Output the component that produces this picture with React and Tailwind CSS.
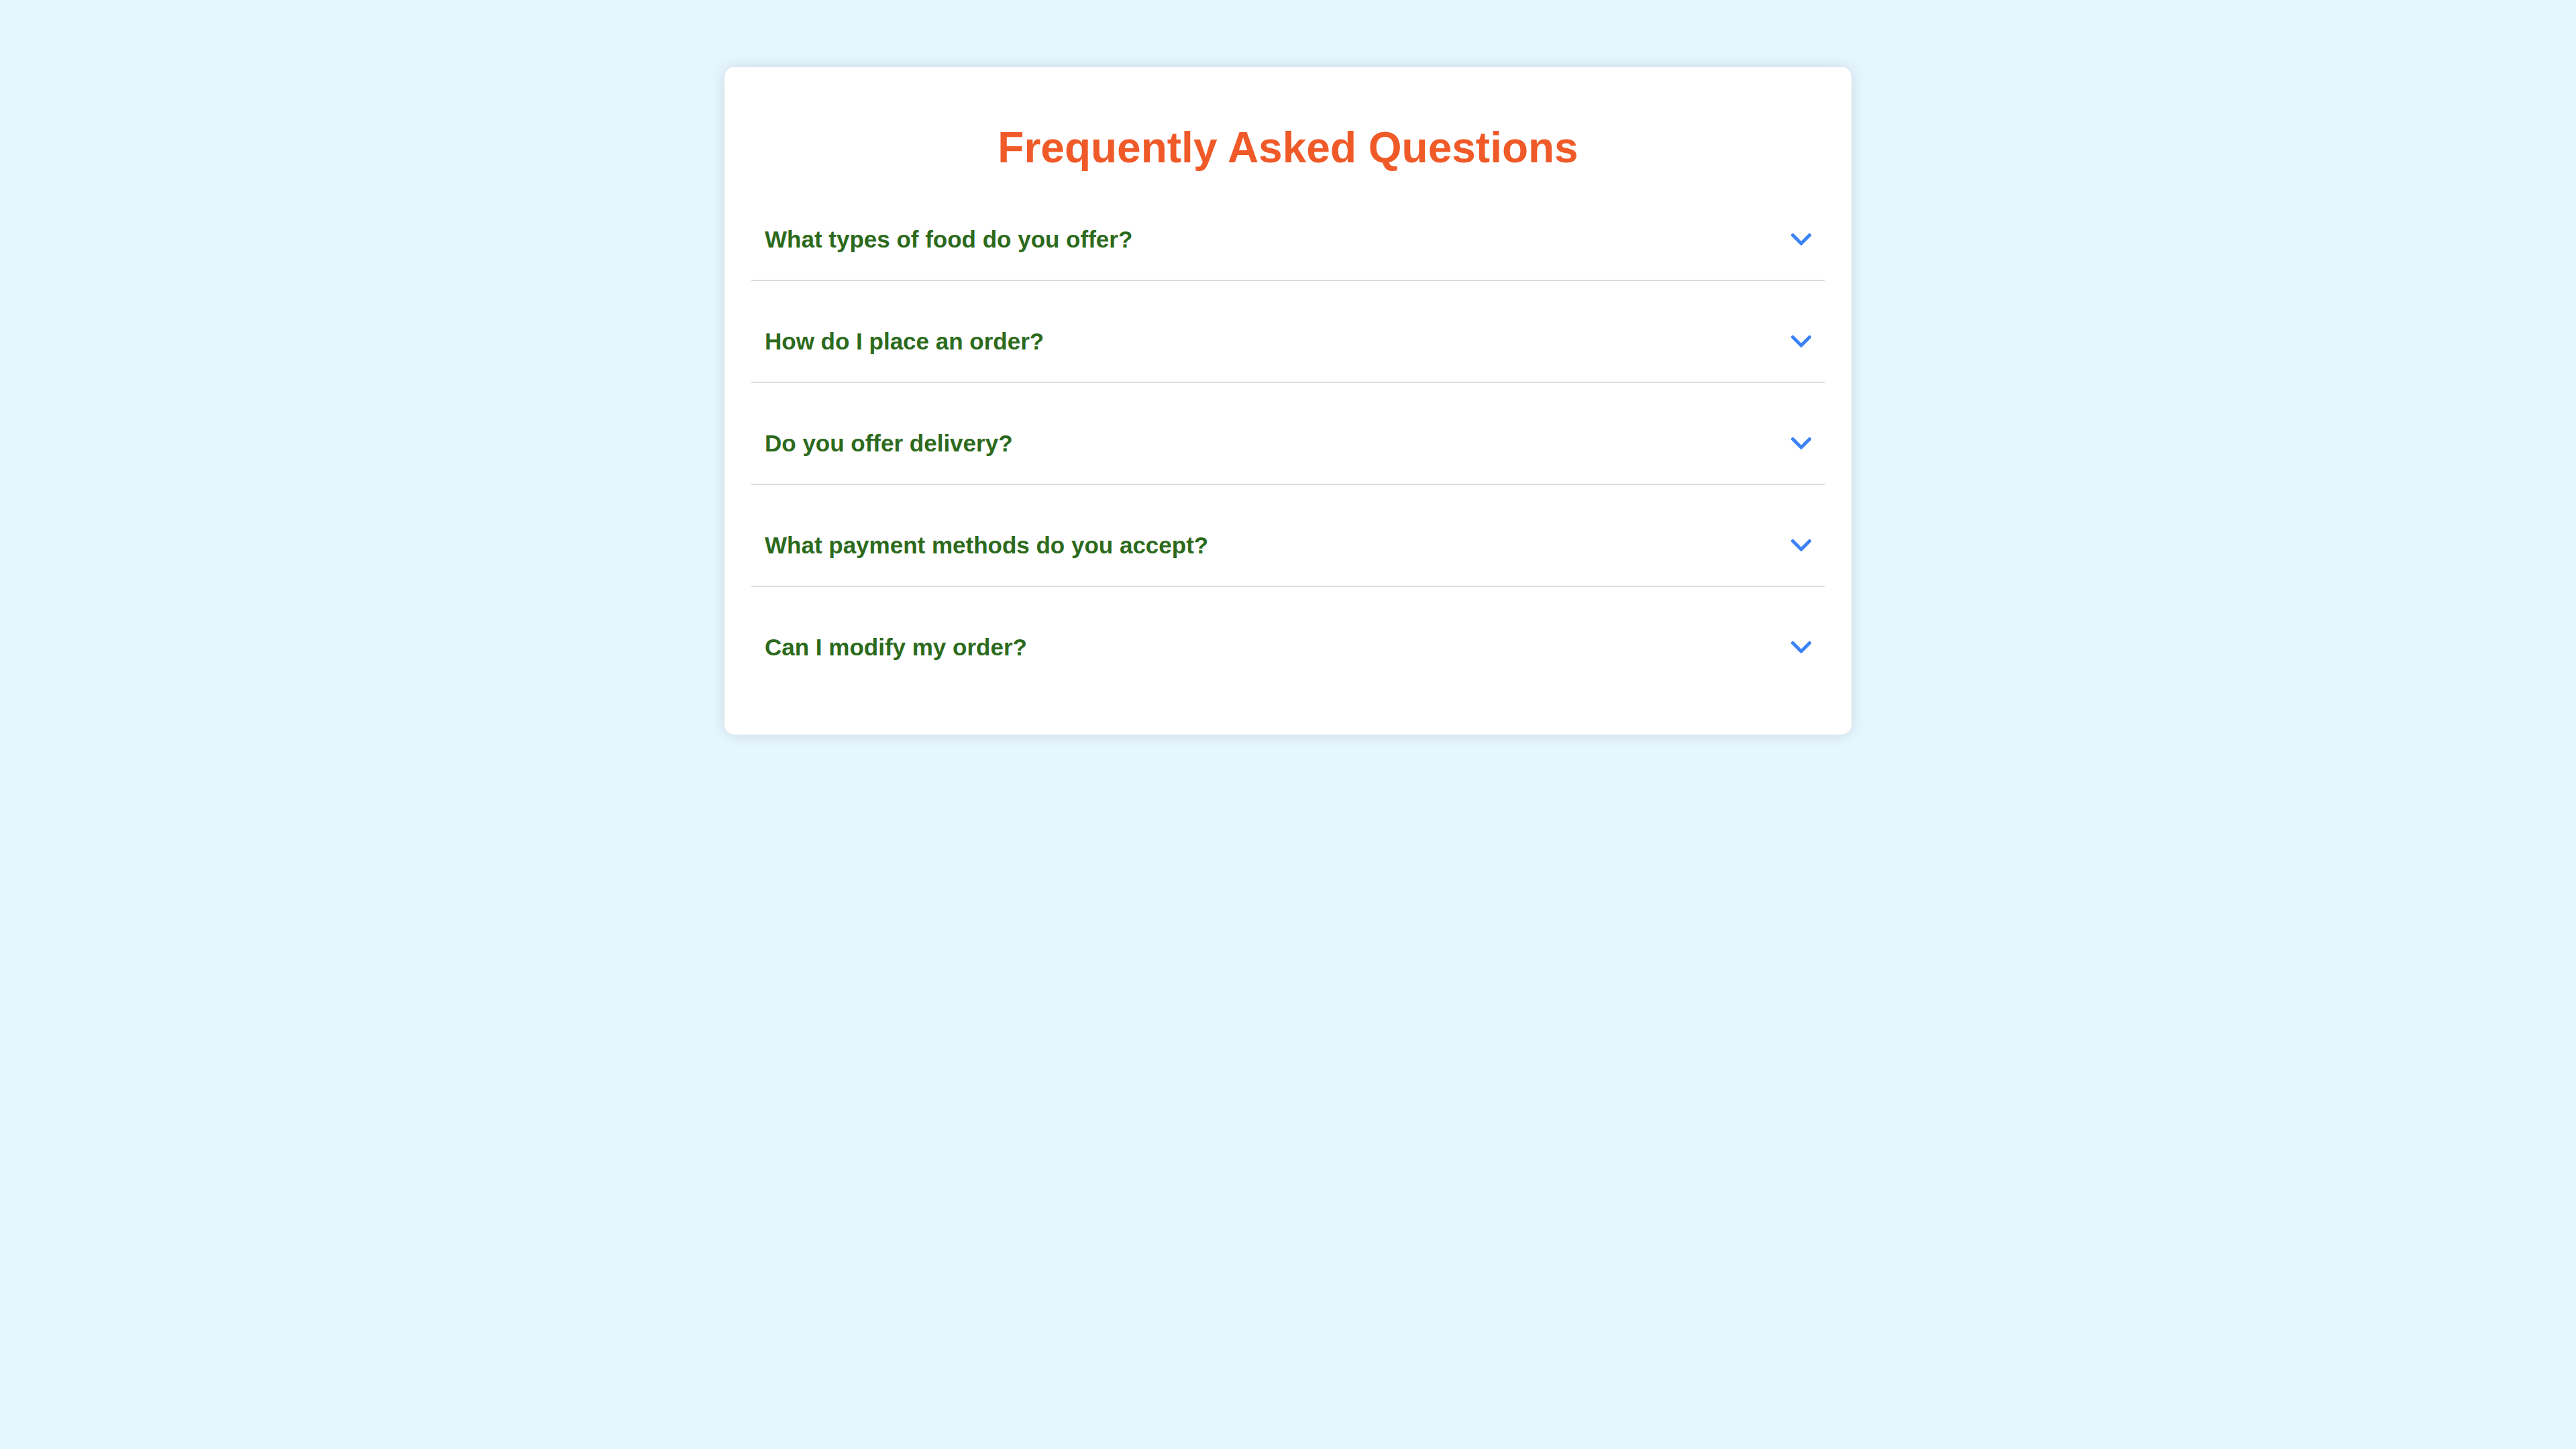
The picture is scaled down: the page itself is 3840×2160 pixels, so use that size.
import { useState } from "react";

const faqs = [
  { q: "What types of food do you offer?", a: "We offer a wide range of dishes, from fresh salads to hearty mains and desserts." },
  { q: "How do I place an order?", a: "Browse the menu, add items to your cart and check out." },
  { q: "Do you offer delivery?", a: "Yes, we deliver within the city limits." },
  { q: "What payment methods do you accept?", a: "We accept cards, cash on delivery and mobile wallets." },
  { q: "Can I modify my order?", a: "You can change your order until it is being prepared." },
];

function Chevron() {
  return (
    <svg width="30" height="19" viewBox="0 0 30 19" fill="none">
      <polyline
        points="2.5,2.5 15,15 27.5,2.5"
        stroke="#3b82f6"
        strokeWidth="5"
        strokeLinecap="round"
        strokeLinejoin="round"
      />
    </svg>
  );
}

function FaqItem({ item, last }) {
  const [open, setOpen] = useState(false);

  return (
    <div className={last ? "mb-[30px]" : "mb-[30px] border-b-2 border-[#dddddd]"}>
      <button
        type="button"
        onClick={() => setOpen(!open)}
        className="w-full flex items-center justify-between px-[20px] py-[40px] text-left leading-[normal] cursor-pointer"
      >
        <span className="text-[35px] font-bold text-[#2c6a1c] leading-[normal]">{item.q}</span>
        <Chevron />
      </button>
      {open && (
        <p className="px-[20px] pb-[30px] text-[30px] text-gray-600">{item.a}</p>
      )}
    </div>
  );
}

export default function App() {
  return (
    <div
      className="min-h-screen bg-[#e6f6fe] pt-[100px]"
      style={{ fontFamily: '"Liberation Sans", Arial, sans-serif' }}
    >
      <div className="w-[1680px] mx-auto bg-white rounded-[15px] shadow-[0_0_22px_rgba(0,0,0,0.12)] pt-[83px] px-[40px] pb-[40px]">
        <h2 className="text-center text-[64px] font-bold text-[#f05a28] mb-[40px] leading-[normal]">
          Frequently Asked Questions
        </h2>

        <div>
          {faqs.map((item, i) => (
            <FaqItem key={item.q} item={item} last={i === faqs.length - 1} />
          ))}
        </div>
      </div>
    </div>
  );
}
